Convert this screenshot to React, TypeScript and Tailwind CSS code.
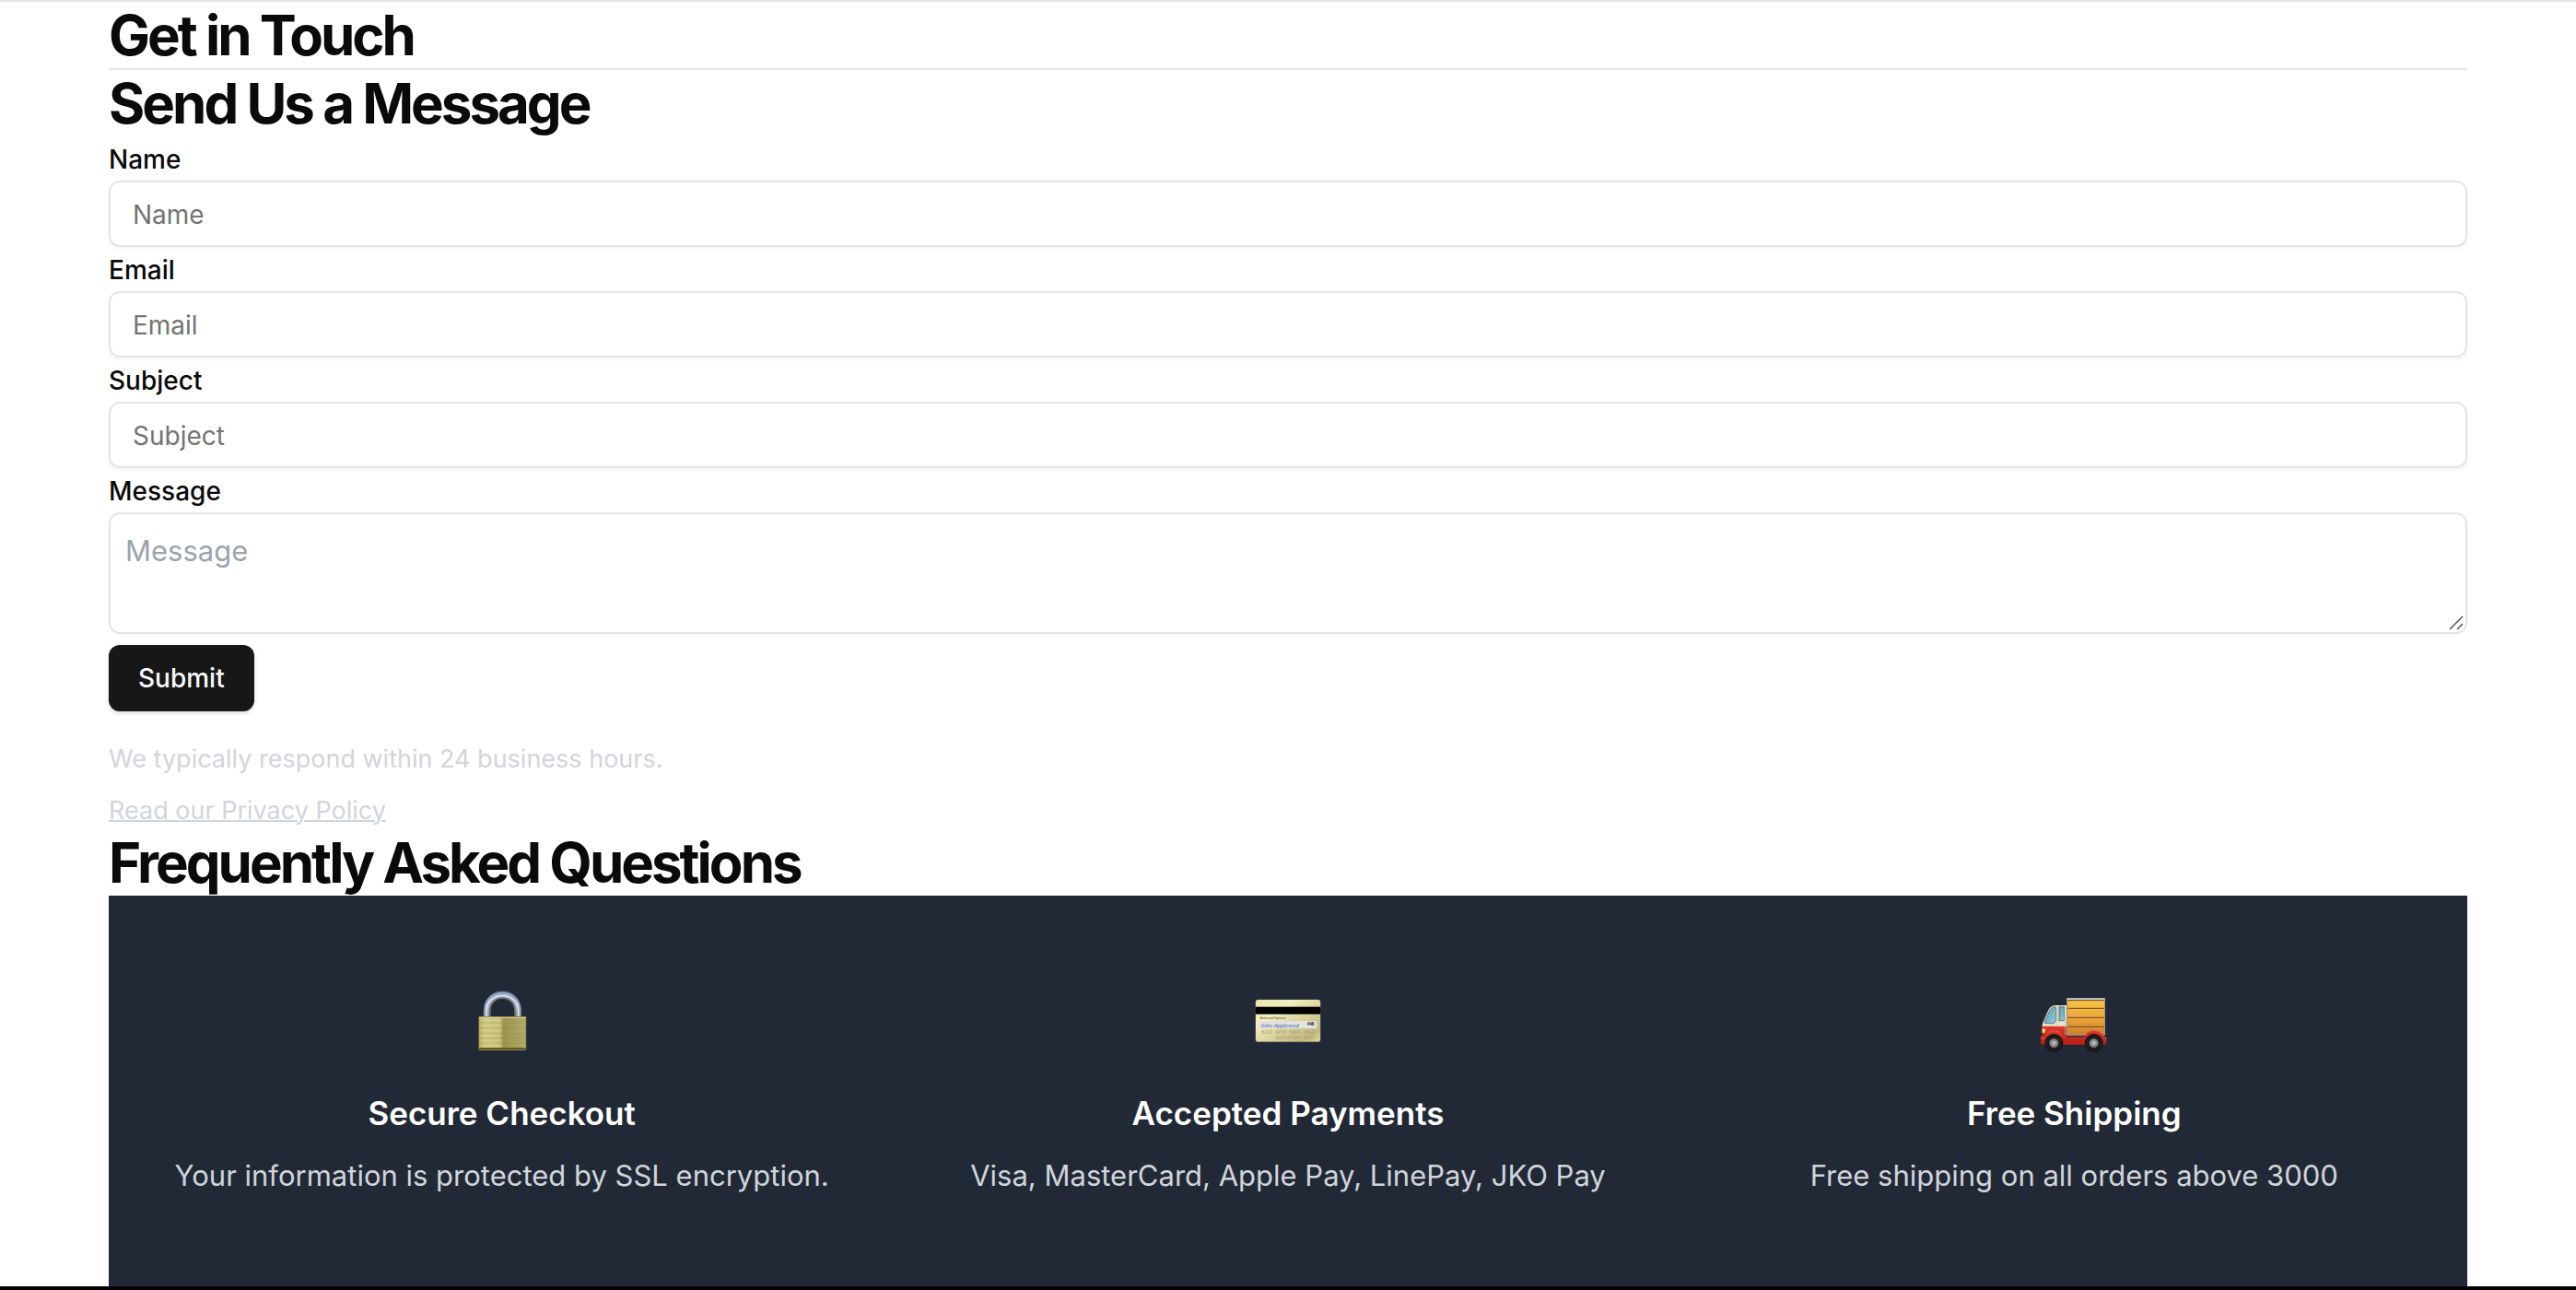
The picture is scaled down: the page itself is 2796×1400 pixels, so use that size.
import type { ReactNode } from "react";

function LockIcon() {
  return (
    <svg viewBox="74 54 240 240" className="size-20" aria-hidden="true">
      <defs>
        <linearGradient id="lock-body" x1="0" x2="1" y1="0" y2="0">
          <stop offset="0" stopColor="#b5ad62" />
          <stop offset="0.12" stopColor="#d3cc86" />
          <stop offset="0.44" stopColor="#c9c27c" />
          <stop offset="0.52" stopColor="#9c9450" />
          <stop offset="1" stopColor="#b3ab68" />
        </linearGradient>
        <linearGradient id="lock-shackle" x1="0" x2="0" y1="0" y2="1">
          <stop offset="0" stopColor="#93a9cc" />
          <stop offset="0.5" stopColor="#9fadc4" />
          <stop offset="1" stopColor="#8b95a8" />
        </linearGradient>
      </defs>
      <path d="M145 162V141C145 71 245 71 245 141V162" fill="none" stroke="#5f6470" strokeWidth="24" />
      <path d="M144 162V141C144 72 246 72 246 141V162" fill="none" stroke="url(#lock-shackle)" strokeWidth="18" />
      <path d="M143 160V141C144 75 245 75 247 141V160" fill="none" stroke="#dfe7f5" strokeWidth="5" />
      <path d="M154 160V143C155 86 235 86 236 143V160" fill="none" stroke="#6f684a" strokeWidth="4" />
      <rect x="117" y="159" width="156" height="111" rx="3" fill="#6e6a3c" />
      <rect x="119" y="161" width="152" height="103" rx="2" fill="url(#lock-body)" />
      <path d="M119 163H271" stroke="#ddd69c" strokeWidth="3" />
      <path d="M119 180H271M119 197H271M119 214H271M119 230H271M119 246H271" stroke="#857d3d" strokeOpacity="0.4" strokeWidth="2" />
      <path d="M121 172H193M121 188H193M121 205H193M121 222H193M121 238H193M121 255H193" stroke="#ebe6a8" strokeOpacity="0.3" strokeWidth="3" />
      <path d="M121 261H269L273 269H117Z" fill="#5d5726" />
      <path d="M120 268H270" stroke="#aaa25c" strokeWidth="2" />
    </svg>
  );
}

function CardIcon() {
  return (
    <svg viewBox="84 54 240 240" className="size-20" aria-hidden="true">
      <defs>
        <linearGradient id="card-face" x1="0" x2="1" y1="0" y2="1">
          <stop offset="0" stopColor="#ede5ac" />
          <stop offset="0.3" stopColor="#f4eec2" />
          <stop offset="0.6" stopColor="#d9d19c" />
          <stop offset="0.85" stopColor="#c3b980" />
          <stop offset="1" stopColor="#ddd5a0" />
        </linearGradient>
      </defs>
      <rect x="98" y="104" width="212" height="139" rx="9" fill="#8f885f" />
      <rect x="99" y="105" width="210" height="136" rx="8" fill="url(#card-face)" />
      <rect x="98" y="128" width="212" height="24" fill="#000" />
      <text x="113" y="167" fontFamily="Liberation Sans" fontSize="9" fill="#4d4a38">Authorized Signature</text>
      <rect x="110" y="174" width="188" height="24" fill="#e2e2e0" />
      <text x="114" y="195" fontFamily="Liberation Serif" fontStyle="italic" fontSize="20" fill="#3f66b4">John Appleseed</text>
      <text x="266" y="190" fontFamily="Liberation Sans" fontWeight="700" fontSize="14" fill="#1c1c1c">448</text>
      <text x="118" y="216" fontFamily="Liberation Mono" fontWeight="700" fontSize="15" fill="#b0a87a">5337 8255 5000 1234</text>
      <text x="165" y="235" fontFamily="Liberation Mono" fontWeight="700" fontSize="15" fill="#b0a87a">033223504 3051</text>
    </svg>
  );
}

function TruckIcon() {
  return (
    <svg viewBox="64 54 240 240" className="size-20" aria-hidden="true">
      <defs>
        <linearGradient id="truck-box" x1="0" x2="0" y1="0" y2="1">
          <stop offset="0" stopColor="#f5c444" />
          <stop offset="0.5" stopColor="#eba63a" />
          <stop offset="1" stopColor="#cd7f2b" />
        </linearGradient>
        <linearGradient id="truck-red" x1="0" x2="0" y1="0" y2="1">
          <stop offset="0" stopColor="#dd3a28" />
          <stop offset="1" stopColor="#b81d15" />
        </linearGradient>
        <linearGradient id="truck-glass" x1="0" x2="1" y1="0" y2="1">
          <stop offset="0" stopColor="#5d94a6" />
          <stop offset="1" stopColor="#8fd0dd" />
        </linearGradient>
        <radialGradient id="truck-hub">
          <stop offset="0" stopColor="#d0d0d3" />
          <stop offset="0.6" stopColor="#88888d" />
          <stop offset="1" stopColor="#5d5d62" />
        </radialGradient>
      </defs>
      <rect x="160" y="100" width="126" height="122" rx="2" fill="#9a9690" />
      <rect x="161" y="100" width="124" height="5" fill="#c9cbd8" />
      <rect x="164" y="107" width="119" height="112" fill="url(#truck-box)" />
      <path d="M164 107H283M164 133H283M164 163H283M164 193H283" stroke="#70471c" strokeWidth="3" />
      <path d="M160 123H124C111 123 104 132 98 145L84 177C81 184 81 190 81 198H160Z" fill="#e9e4cd" />
      <path d="M81 191H160V226H290V245Q290 251 284 251H82Q76 251 76 245V226L81 221Z" fill="url(#truck-red)" />
      <path d="M220 226C224 198 274 198 282 226Z" fill="#d83425" />
      <path d="M90 226C92 202 143 202 148 226Z" fill="#d83425" />
      <path d="M99 212C110 204 131 205 139 214M228 213C238 203 263 204 272 214" fill="none" stroke="#ee7565" strokeWidth="2" />
      <path d="M121 128Q126 127 126 132V174L119 182H91Q86 181 89 174L105 140Q111 129 121 128Z" fill="url(#truck-glass)" stroke="#4b5558" strokeWidth="2" />
      <path d="M136 128H152V173H136Z" fill="url(#truck-glass)" stroke="#4b5558" strokeWidth="2" />
      <path d="M132 128V190M156 126V220" stroke="#c5bea6" strokeWidth="2" />
      <path d="M81 198L90 199Q93 206 89 213H80Z" fill="#f4b54c" />
      <circle cx="86" cy="205" r="4" fill="#ffe49a" />
      <path d="M76 230H90M278 230H290" stroke="#e6584a" strokeWidth="3" />
      <circle cx="119" cy="246" r="30" fill="#151314" />
      <circle cx="119" cy="246" r="23" fill="none" stroke="#302e30" strokeWidth="3" />
      <circle cx="119" cy="246" r="16" fill="url(#truck-hub)" />
      <circle cx="249" cy="246" r="30" fill="#151314" />
      <circle cx="249" cy="246" r="23" fill="none" stroke="#302e30" strokeWidth="3" />
      <circle cx="249" cy="246" r="16" fill="url(#truck-hub)" />
    </svg>
  );
}

function Heading({ children }: { children: ReactNode }) {
  return <h2 className="text-[60px] leading-[72px] font-bold tracking-tighter">{children}</h2>;
}

function Label({ htmlFor, children }: { htmlFor: string; children: ReactNode }) {
  return (
    <div className="text-[32px] leading-[48px]">
      <label htmlFor={htmlFor} className="text-[28px] leading-none font-medium">
        {children}
      </label>
    </div>
  );
}

function Field({ id, label, type = "text" }: { id: string; label: string; type?: string }) {
  return (
    <div>
      <Label htmlFor={id}>{label}</Label>
      <input
        id={id}
        type={type}
        placeholder={label}
        className="block h-[72px] w-full rounded-xl border-2 border-[#e5e5e5] bg-transparent px-6 pt-0.5 text-[28px] shadow-[0_2px_4px_rgba(0,0,0,0.05)] placeholder:text-[#737373]"
      />
    </div>
  );
}

const features = [
  { icon: <LockIcon />, title: "Secure Checkout", text: "Your information is protected by SSL encryption." },
  { icon: <CardIcon />, title: "Accepted Payments", text: "Visa, MasterCard, Apple Pay, LinePay, JKO Pay" },
  { icon: <TruckIcon />, title: "Free Shipping", text: "Free shipping on all orders above 3000" },
];

export default function App() {
  return (
    <div className="border-t-2 border-[#e5e5e5] bg-white font-['Inter',sans-serif] text-[#0a0a0a]">
      <main className="mx-auto max-w-[2560px]">
        <div className="border-b-2 border-[#e5e5e5]">
          <Heading>Get in Touch</Heading>
        </div>
        <Heading>Send Us a Message</Heading>
        <form onSubmit={(event) => event.preventDefault()}>
          <Field id="name" label="Name" />
          <Field id="email" label="Email" type="email" />
          <Field id="subject" label="Subject" />
          <Label htmlFor="message">Message</Label>
          <div className="relative">
            <textarea
              id="message"
              rows={2}
              placeholder="Message"
              className="block w-full resize-y rounded-xl border-2 border-[#e5e5e5] bg-transparent p-4 text-[31px] leading-[48px] placeholder:text-[#9ca3af] [&::-webkit-resizer]:bg-transparent"
            />
            <svg viewBox="0 0 16 16" className="pointer-events-none absolute right-1 bottom-1 size-4" aria-hidden="true">
              <path d="M1 15L15 1M9 15L15 9" stroke="#555" strokeWidth="1.5" />
            </svg>
          </div>
          <button
            type="submit"
            className="mt-3 block h-[72px] rounded-xl bg-[#171717] px-8 text-[28px] font-medium text-[#fafafa] shadow-[0_2px_4px_rgba(0,0,0,0.15)]"
          >
            Submit
          </button>
        </form>
        <p className="mt-8 text-[27px] leading-10 text-[#d1d5db]">We typically respond within 24 business hours.</p>
        <p className="mt-4 text-[27px] leading-10 text-[#d1d5db]">
          <a href="#privacy" className="underline decoration-2">
            Read our Privacy Policy
          </a>
        </p>
        <Heading>Frequently Asked Questions</Heading>
        <section className="grid grid-cols-3 bg-[#222936] py-24 text-center">
          {features.map((feature) => (
            <div key={feature.title} className="flex flex-col items-center">
              {feature.icon}
              <h3 className="mt-8 text-[35px] leading-[56px] font-semibold text-white">{feature.title}</h3>
              <p className="mt-4 text-[31px] leading-[48px] text-[#d1d5db]">{feature.text}</p>
            </div>
          ))}
        </section>
      </main>
      <footer className="h-1 bg-black" />
    </div>
  );
}
